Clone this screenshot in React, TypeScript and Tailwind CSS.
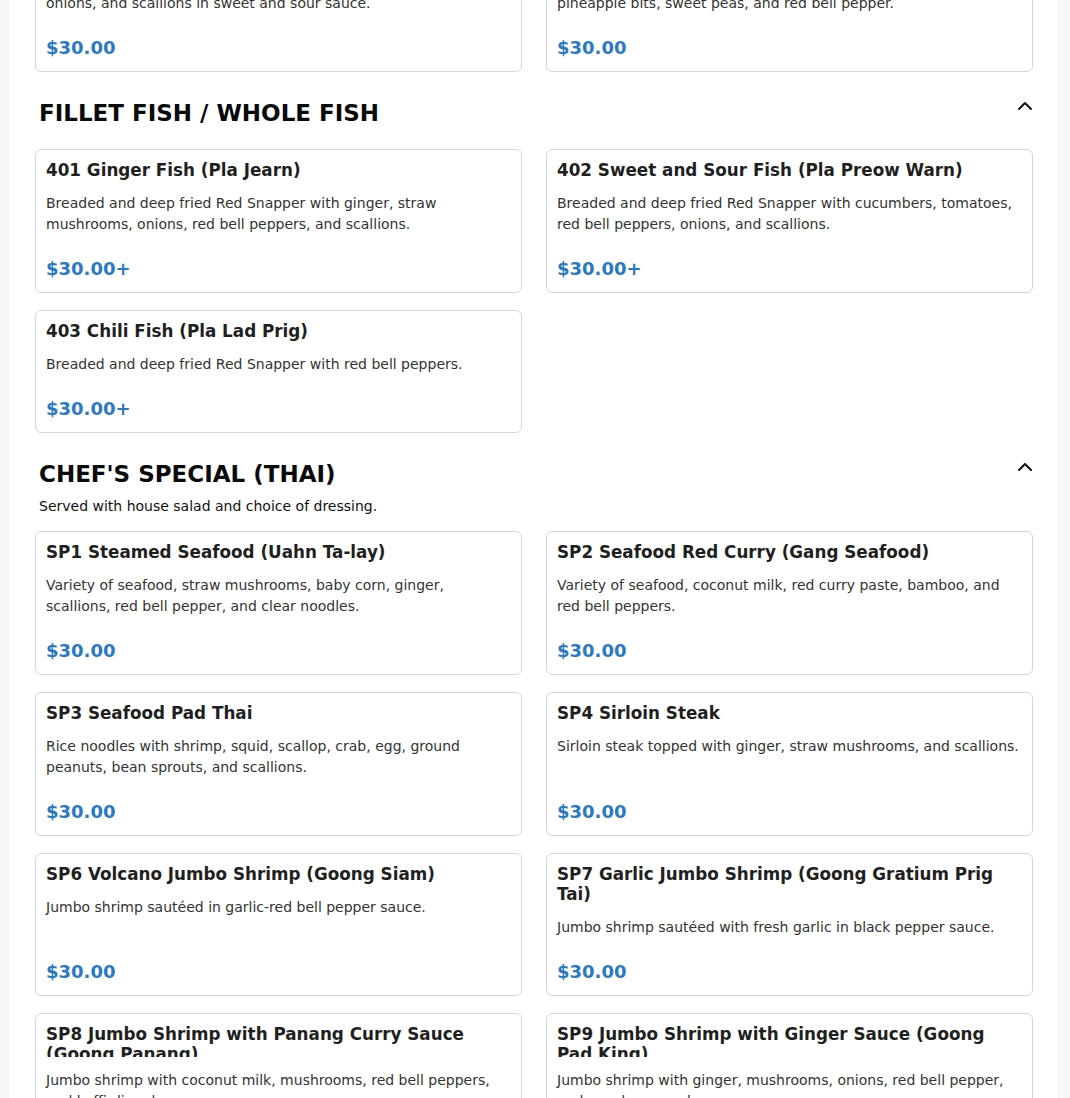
import React from "react";

type Item = { title: string; desc: string; price: string; clip?: boolean };

const topItems: Item[] = [
  {
    title: "213 Sweet and Sour Seafood",
    desc: "Jumbo shrimp, scallops, and squid with cucumbers, tomatoes, onions, and scallions in sweet and sour sauce.",
    price: "$30.00",
  },
  {
    title: "214 Pineapple Fried Rice",
    desc: "Pineapple fried rice with shrimp, chicken, egg, cashew nuts, pineapple bits, sweet peas, and red bell pepper.",
    price: "$30.00",
  },
];

const fishItems: Item[] = [
  {
    title: "401 Ginger Fish (Pla Jearn)",
    desc: "Breaded and deep fried Red Snapper with ginger, straw mushrooms, onions, red bell peppers, and scallions.",
    price: "$30.00+",
  },
  {
    title: "402 Sweet and Sour Fish (Pla Preow Warn)",
    desc: "Breaded and deep fried Red Snapper with cucumbers, tomatoes, red bell peppers, onions, and scallions.",
    price: "$30.00+",
  },
  {
    title: "403 Chili Fish (Pla Lad Prig)",
    desc: "Breaded and deep fried Red Snapper with red bell peppers.",
    price: "$30.00+",
  },
];

const chefItems: Item[] = [
  {
    title: "SP1 Steamed Seafood (Uahn Ta-lay)",
    desc: "Variety of seafood, straw mushrooms, baby corn, ginger, scallions, red bell pepper, and clear noodles.",
    price: "$30.00",
  },
  {
    title: "SP2 Seafood Red Curry (Gang Seafood)",
    desc: "Variety of seafood, coconut milk, red curry paste, bamboo, and red bell peppers.",
    price: "$30.00",
  },
  {
    title: "SP3 Seafood Pad Thai",
    desc: "Rice noodles with shrimp, squid, scallop, crab, egg, ground peanuts, bean sprouts, and scallions.",
    price: "$30.00",
  },
  {
    title: "SP4 Sirloin Steak",
    desc: "Sirloin steak topped with ginger, straw mushrooms, and scallions.",
    price: "$30.00",
  },
  {
    title: "SP6 Volcano Jumbo Shrimp (Goong Siam)",
    desc: "Jumbo shrimp sautéed in garlic-red bell pepper sauce.",
    price: "$30.00",
  },
  {
    title: "SP7 Garlic Jumbo Shrimp (Goong Gratium Prig Tai)",
    desc: "Jumbo shrimp sautéed with fresh garlic in black pepper sauce.",
    price: "$30.00",
  },
  {
    title: "SP8 Jumbo Shrimp with Panang Curry Sauce (Goong Panang)",
    desc: "Jumbo shrimp with coconut milk, mushrooms, red bell peppers, and kaffir lime leaves.",
    price: "$30.00",
    clip: true,
  },
  {
    title: "SP9 Jumbo Shrimp with Ginger Sauce (Goong Pad King)",
    desc: "Jumbo shrimp with ginger, mushrooms, onions, red bell pepper, and wood ear mushrooms.",
    price: "$30.00",
    clip: true,
  },
];

function Card({ item }: { item: Item }) {
  return (
    <div className="flex flex-col rounded-[6px] border border-[#d6d6d6] bg-white p-[10px]">
      <h3
        className={
          "mb-[13px] text-[16.8px] font-bold leading-[20px] text-[#1f1f1f]" +
          (item.clip ? " max-h-[33px] overflow-hidden" : "")
        }
      >
        {item.title}
      </h3>
      <p className="text-[14px] leading-[21px] text-[#333333]">{item.desc}</p>
      <div className="mt-auto pt-[20px] text-[18px] font-bold leading-[27px] text-[#2a79c2]">
        {item.price}
      </div>
    </div>
  );
}

function Chevron() {
  return (
    <svg
      width="24"
      height="24"
      viewBox="0 0 24 24"
      fill="none"
      stroke="#111111"
      strokeWidth="2"
      strokeLinecap="round"
      strokeLinejoin="round"
      className="-mr-[4px] -mt-[3px] shrink-0"
    >
      <path d="m18 15-6-6-6 6" />
    </svg>
  );
}

function Grid({ items, className = "" }: { items: Item[]; className?: string }) {
  return (
    <div className={"grid grid-cols-2 gap-x-[24px] gap-y-[17px] " + className}>
      {items.map((it) => (
        <Card key={it.title} item={it} />
      ))}
    </div>
  );
}

function Header({ title }: { title: string }) {
  return (
    <div className="flex items-start justify-between">
      <h2 className="pl-[4px] text-[23px] font-bold leading-[32px] text-[#0a0a0a]">
        {title}
      </h2>
      <Chevron />
    </div>
  );
}

export default function App() {
  return (
    <div
      className="min-h-screen bg-[#f7f7f7]"
      style={{ fontFamily: "'DejaVu Sans', sans-serif" }}
    >
      <div className="ml-[10px] h-[1098px] w-[1048px] overflow-hidden bg-white px-[25px]">
        <Grid items={topItems} className="-mt-[72px]" />

        <section className="mt-[25px]">
          <Header title="FILLET FISH / WHOLE FISH" />
          <Grid items={fishItems} className="mt-[20px]" />
        </section>

        <section className="mt-[25px]">
          <Header title="CHEF'S SPECIAL (THAI)" />
          <p className="mt-[6px] pl-[4px] text-[14px] leading-[21px] text-[#111111]">
            Served with house salad and choice of dressing.
          </p>
          <Grid items={chefItems} className="mt-[14px]" />
        </section>
      </div>
    </div>
  );
}
